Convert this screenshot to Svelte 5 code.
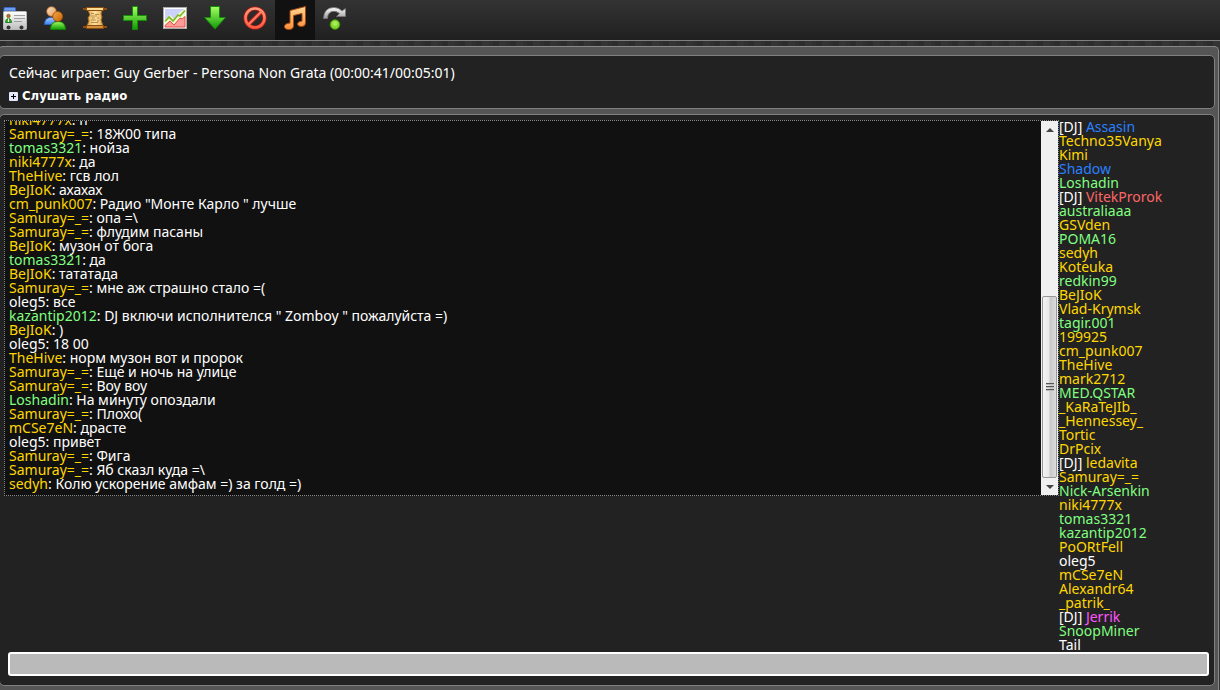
<script lang="ts">
    type Rank = 'gold' | 'green' | 'blue' | 'red' | 'pink' | 'plain';
    type Message = { from: string; rank: Rank; text: string };
    type Member = { name: string; rank: Rank; dj?: boolean };

    let draft = $state('');
    let active = $state('music');

    const tools = [
        { id: 'profile', label: 'Профиль' },
        { id: 'friends', label: 'Друзья' },
        { id: 'scroll', label: 'Правила' },
        { id: 'add', label: 'Добавить' },
        { id: 'stats', label: 'Статистика' },
        { id: 'download', label: 'Скачать' },
        { id: 'ban', label: 'Баны' },
        { id: 'music', label: 'Радио' },
        { id: 'redo', label: 'Перейти' }
    ];

    const messages: Message[] = [
        { from: 'niki4777x', rank: 'gold', text: 'п' },
        { from: 'Samuray=_=', rank: 'gold', text: '18Ж00 типа' },
        { from: 'tomas3321', rank: 'green', text: 'нойза' },
        { from: 'niki4777x', rank: 'gold', text: 'да' },
        { from: 'TheHive', rank: 'gold', text: 'гсв лол' },
        { from: 'BeJIoK', rank: 'gold', text: 'ахахах' },
        { from: 'cm_punk007', rank: 'gold', text: 'Радио "Монте Карло " лучше' },
        { from: 'Samuray=_=', rank: 'gold', text: 'опа =\\' },
        { from: 'Samuray=_=', rank: 'gold', text: 'флудим пасаны' },
        { from: 'BeJIoK', rank: 'gold', text: 'музон от бога' },
        { from: 'tomas3321', rank: 'green', text: 'да' },
        { from: 'BeJIoK', rank: 'gold', text: 'тататада' },
        { from: 'Samuray=_=', rank: 'gold', text: 'мне аж страшно стало =(' },
        { from: 'oleg5', rank: 'plain', text: 'все' },
        { from: 'kazantip2012', rank: 'green', text: 'DJ включи исполнителся " Zomboy " пожалуйста =)' },
        { from: 'BeJIoK', rank: 'gold', text: ')' },
        { from: 'oleg5', rank: 'plain', text: '18 00' },
        { from: 'TheHive', rank: 'gold', text: 'норм музон вот и пророк' },
        { from: 'Samuray=_=', rank: 'gold', text: 'Еще и ночь на улице' },
        { from: 'Samuray=_=', rank: 'gold', text: 'Воу воу' },
        { from: 'Loshadin', rank: 'green', text: 'На минуту опоздали' },
        { from: 'Samuray=_=', rank: 'gold', text: 'Плохо(' },
        { from: 'mCSe7eN', rank: 'gold', text: 'драсте' },
        { from: 'oleg5', rank: 'plain', text: 'привет' },
        { from: 'Samuray=_=', rank: 'gold', text: 'Фига' },
        { from: 'Samuray=_=', rank: 'gold', text: 'Яб сказл куда =\\' },
        { from: 'sedyh', rank: 'gold', text: 'Колю ускорение амфам =) за голд =)' }
    ];

    const members: Member[] = [
        { name: 'Assasin', rank: 'blue', dj: true },
        { name: 'Techno35Vanya', rank: 'gold' },
        { name: 'Kimi', rank: 'gold' },
        { name: 'Shadow', rank: 'blue' },
        { name: 'Loshadin', rank: 'green' },
        { name: 'VitekProrok', rank: 'red', dj: true },
        { name: 'australiaaa', rank: 'green' },
        { name: 'GSVden', rank: 'gold' },
        { name: 'POMA16', rank: 'green' },
        { name: 'sedyh', rank: 'gold' },
        { name: 'Koteuka', rank: 'gold' },
        { name: 'redkin99', rank: 'green' },
        { name: 'BeJIoK', rank: 'gold' },
        { name: 'Vlad-Krymsk', rank: 'gold' },
        { name: 'tagir.001', rank: 'green' },
        { name: '199925', rank: 'gold' },
        { name: 'cm_punk007', rank: 'gold' },
        { name: 'TheHive', rank: 'gold' },
        { name: 'mark2712', rank: 'gold' },
        { name: 'MED.QSTAR', rank: 'green' },
        { name: '_KaRaTeJIb_', rank: 'gold' },
        { name: '_Hennessey_', rank: 'gold' },
        { name: 'Tortic', rank: 'gold' },
        { name: 'DrPcix', rank: 'gold' },
        { name: 'ledavita', rank: 'gold', dj: true },
        { name: 'Samuray=_=', rank: 'gold' },
        { name: 'Nick-Arsenkin', rank: 'green' },
        { name: 'niki4777x', rank: 'gold' },
        { name: 'tomas3321', rank: 'green' },
        { name: 'kazantip2012', rank: 'green' },
        { name: 'PoORtFell', rank: 'gold' },
        { name: 'oleg5', rank: 'plain' },
        { name: 'mCSe7eN', rank: 'gold' },
        { name: 'Alexandr64', rank: 'gold' },
        { name: '_patrik_', rank: 'gold' },
        { name: 'Jerrik', rank: 'pink', dj: true },
        { name: 'SnoopMiner', rank: 'green' },
        { name: 'Tail', rank: 'plain' }
    ];
</script>

<nav class="toolbar">
    {#each tools as tool}
        <button class:active={active === tool.id} aria-label={tool.label} onclick={() => (active = tool.id)}>
            <svg viewBox="0 0 24 24" width="24" height="24">
                {#if tool.id === 'profile'}
                    <path d="M1 6V2.500Q1 1.500 2 1.500H11.500Q12.500 1.500 12.500 2.500V5H1z" fill="#6d9df0" stroke="#3d68c8" />
                    <rect x="0.500" y="5.500" width="23" height="18" rx="1" fill="url(#paper)" stroke="#b8b8b8" />
                    <rect x="2" y="8" width="7" height="9" fill="#e8ffe0" />
                    <path d="M2.500 16.500Q2.500 12.500 5.500 12.500T8.500 16.500z" fill="#48b13e" stroke="#1d7a1d" />
                    <circle cx="5.500" cy="10" r="1.800" fill="#b96a40" stroke="#8a4518" stroke-width="0.600" />
                    <path d="M5.500 12.500V16" stroke="#fff" />
                    <path d="M11 9.500H22M11 12.500H22M11 15.500H19" stroke="#a0a0a0" />
                    <circle cx="5.500" cy="21.500" r="2" fill="#333" />
                    <circle cx="18.500" cy="21.500" r="2" fill="#333" />
                {:else if tool.id === 'friends'}
                    <path d="M1.500 18.500Q1.500 11.500 8 11.500H12V18.500z" fill="url(#blue)" stroke="#2b62bf" />
                    <circle cx="8.500" cy="5.500" r="4.800" fill="url(#skin)" stroke="#b0662c" stroke-width="0.800" />
                    <path d="M7.500 23.500Q7.500 15.500 15 15.500T22.500 23.500z" fill="url(#green)" stroke="#158000" />
                    <circle cx="14.700" cy="10.500" r="5" fill="url(#tan)" stroke="#974700" stroke-width="0.800" />
                {:else if tool.id === 'scroll'}
                    <path d="M5 4H19L18 8L19 11L18 14L20 20H4L6 15L5 12L7 9z" fill="url(#parchment)" stroke="#a96f22" />
                    <path d="M8 7.500h3m1 1h4M8 10h6m-5 2h3m2 0h2M8 14h5m1 1h2M8 16.500h7" stroke="#a87937" stroke-width="0.800" />
                    <path d="M3.500 1.500H20.500V4.500H3.500zM3.500 19.500H20.500V22.500H3.500z" fill="url(#roll)" stroke="#8b4d10" />
                    <path d="M0 3H4M20 3H24M0 21H4M20 21H24" stroke="#944c0d" stroke-width="2" />
                {:else if tool.id === 'add'}
                    <path d="M9.500 0.500H14.500V9.500H23.500V14.500H14.500V23.500H9.500V14.500H0.500V9.500H9.500z" fill="url(#green)" stroke="#168b08" />
                {:else if tool.id === 'stats'}
                    <rect x="0.500" y="1.500" width="23" height="21" fill="#fff" stroke="#aaa" />
                    <rect x="2" y="3" width="20" height="18" fill="#ccd2fa" />
                    <path d="M2 14L7 9L11 13L16 7L22 2.500V21H2z" fill="#efffd0" />
                    <path d="M2 15.500L6 11L10 15L15 9L17 10L22 4.500" fill="none" stroke="#83ba2d" stroke-width="1.800" />
                    <path d="M2 19.500L7 15L11 19L17 12L19 13L22 10.500V21H2z" fill="#ff9c98" stroke="#e34c46" />
                {:else if tool.id === 'download'}
                    <path d="M7.500 0.500H16.500V11.500H22.500L12 23L1.500 11.500H7.500z" fill="url(#green)" stroke="#148a08" />
                {:else if tool.id === 'ban'}
                    <circle cx="12" cy="12" r="9.500" fill="none" stroke="#b7180d" stroke-width="4.200" />
                    <path d="M5.500 18.500L18.500 5.500" stroke="#b7180d" stroke-width="4.200" />
                    <circle cx="12" cy="12" r="9.500" fill="none" stroke="url(#red)" stroke-width="2.600" />
                    <path d="M5.500 18.500L18.500 5.500" stroke="#ff7964" stroke-width="2.400" />
                {:else if tool.id === 'music'}
                    <path
                        d="M7 4.500L22.500 0.500V17Q22.500 20.500 18.500 20.500T14.500 18Q14.500 15.500 19 15V7.500L10.500 9.500V19.500Q10.500 23.500 6 23.500T1.500 20.500Q1.500 17.500 7 17z"
                        fill="url(#orange)"
                        stroke="#a44914"
                    />
                {:else}
                    <path d="M0.500 12.500Q1 1.500 11 1.500Q16 1.500 19 5L22.500 2.500V10.500H13.500L16.500 7.500Q13 4.500 9 5.500Q4.500 7 4.500 12.500z" fill="url(#silver)" stroke="#777" stroke-width="0.800" />
                    <circle cx="12" cy="18.500" r="4.800" fill="#83d72c" stroke="#428f11" />
                    <circle cx="12" cy="17.500" r="2.500" fill="#a6ec58" />
                {/if}
            </svg>
        </button>
    {/each}
    <svg class="defs" width="0" height="0" aria-hidden="true">
        <defs>
            <linearGradient id="green" x2="0" y2="1"><stop stop-color="#a5ff63" /><stop offset="1" stop-color="#109b07" /></linearGradient>
            <linearGradient id="paper" x2="0" y2="1"><stop stop-color="#fff" /><stop offset="1" stop-color="#bdbdbd" /></linearGradient>
            <linearGradient id="blue" x2="0" y2="1"><stop stop-color="#a8ccff" /><stop offset="1" stop-color="#3b84ec" /></linearGradient>
            <linearGradient id="skin" x2="1" y2="1"><stop stop-color="#ffe2bd" /><stop offset="1" stop-color="#e39a59" /></linearGradient>
            <linearGradient id="tan" x2="1" y2="1"><stop stop-color="#f6a849" /><stop offset="1" stop-color="#c76205" /></linearGradient>
            <linearGradient id="parchment"><stop stop-color="#e0ab58" /><stop offset="0.500" stop-color="#ffe2a0" /><stop offset="1" stop-color="#e0ab58" /></linearGradient>
            <linearGradient id="roll" x2="0" y2="1"><stop stop-color="#ffe49a" /><stop offset="1" stop-color="#d08a37" /></linearGradient>
            <linearGradient id="red" x2="0" y2="1"><stop stop-color="#ff9c7e" /><stop offset="1" stop-color="#fa5b46" /></linearGradient>
            <linearGradient id="orange" x2="0" y2="1"><stop stop-color="#ffd794" /><stop offset="1" stop-color="#ff8d3a" /></linearGradient>
            <linearGradient id="silver" x2="0" y2="1"><stop stop-color="#fff" /><stop offset="1" stop-color="#999" /></linearGradient>
        </defs>
    </svg>
</nav>

<main>
    <section class="panel radio">
        <p>Сейчас играет: Guy Gerber - Persona Non Grata (00:00:41/00:05:01)</p>
        <button class="listen">
            <svg viewBox="0 0 9 9" width="9" height="9" aria-hidden="true">
                <rect width="9" height="9" rx="1" fill="#e4e8fa" />
                <path d="M2 4.500H7M4.500 2V7" stroke="#000" />
            </svg>
            Слушать радио
        </button>
    </section>

    <section class="panel chat">
        <div class="columns">
            <div class="log">
                <div class="messages">
                    {#each messages as message}
                        <p><span class={message.rank}>{message.from}</span>: {message.text}</p>
                    {/each}
                </div>
                <div class="scrollbar">
                    <button class="arrow up" aria-label="Вверх"></button>
                    <div class="track">
                        <div class="thumb"><i></i></div>
                    </div>
                    <button class="arrow down" aria-label="Вниз"></button>
                </div>
            </div>
            <ul class="members">
                {#each members as member}
                    <li>{#if member.dj}[DJ]{' '}{/if}<a href="#{member.name}" class={member.rank}>{member.name}</a></li>
                {/each}
            </ul>
        </div>
        <input type="text" aria-label="Сообщение" bind:value={draft} />
    </section>
</main>

<style>
    :global(body) {
        background: repeating-linear-gradient(90deg, #2c2c2c 0 6px, #343434 6px 13px, #303030 13px 17px);
        color: #fff;
        font: 14px/14px "Noto Sans", sans-serif;
        overflow: hidden;
    }

    :global(#app) {
        display: flex;
        flex-direction: column;
        min-height: 100vh;
    }

    p,
    ul {
        margin: 0;
        padding: 0;
    }

    button {
        border: 0;
        padding: 0;
        background: none;
        color: inherit;
        font: inherit;
        cursor: pointer;
    }

    .toolbar {
        display: flex;
        height: 40px;
        padding-right: 5px;
        margin-left: -5px;
        background: linear-gradient(#333, #202020);
        border-bottom: 1px solid #808080;
    }

    .toolbar button {
        display: grid;
        place-items: center;
        width: 40px;
        padding-bottom: 4px;
    }

    .toolbar button.active {
        background: #111;
    }

    .defs {
        position: absolute;
    }

    main {
        flex: 1;
        display: flex;
        flex-direction: column;
        gap: 5px;
        margin: 5px 1px 0 -2px;
        padding: 8px 3px 4px 0;
        background: #555;
        border: 1px solid #888;
        border-bottom: 0;
        border-radius: 5px 5px 0 0;
    }

    .panel {
        background: #222;
        border: 1px solid #808080;
        border-radius: 5px;
    }

    .radio {
        padding: 10px 9px 5px;
    }

    .listen {
        display: flex;
        align-items: center;
        gap: 4px;
        margin-top: 9px;
        font: bold 13px/14px "DejaVu Sans Condensed", "DejaVu Sans", sans-serif;
    }

    .chat {
        flex: 1;
        padding: 5px 4px 8px;
    }

    .columns {
        display: flex;
        align-items: flex-start;
    }

    .log {
        flex: 1;
        display: flex;
        height: 374px;
        background: #111;
        border: 1px dotted #888;
    }

    .messages {
        flex: 1;
        display: flex;
        flex-direction: column;
        justify-content: flex-end;
        overflow: hidden;
        padding: 0 4px 4px;
    }

    .scrollbar {
        display: flex;
        flex-direction: column;
        width: 17px;
        background: #f0f0f0;
    }

    .arrow {
        display: grid;
        place-items: center;
        height: 17px;
    }

    .arrow::before {
        content: '';
        border: 4px solid transparent;
    }

    .arrow.up::before {
        border-top: 0;
        border-bottom-color: #444;
    }

    .arrow.down::before {
        border-bottom: 0;
        border-top-color: #444;
    }

    .track {
        flex: 1;
        display: flex;
        flex-direction: column;
        justify-content: flex-end;
        padding: 0 1px;
    }

    .thumb {
        display: grid;
        place-items: center;
        height: 180px;
        background: linear-gradient(90deg, #f4f4f4, #e8e8e8 45%, #c8c8cc 55%, #dcdcdc);
        border: 1px solid #979797;
        border-radius: 2px;
    }

    .thumb i {
        width: 8px;
        height: 8px;
        background: repeating-linear-gradient(#555 0 1px, #bbb 1px 2px, transparent 2px 3px);
    }

    .members {
        width: 151px;
        list-style: none;
    }

    .members a {
        text-decoration: none;
    }

    .gold {
        color: #ffd700;
    }

    .green {
        color: #80ff80;
    }

    .blue {
        color: #2a80ff;
    }

    .red {
        color: #ff6666;
    }

    .pink {
        color: #ff55ff;
    }

    .plain {
        color: #fff;
    }

    input {
        display: block;
        box-sizing: border-box;
        width: calc(100% - 5px);
        height: 24px;
        margin: 0 1px 0 4px;
        padding: 0 4px;
        background: #bababa;
        border: 2px solid #fff;
        border-radius: 3px;
        color: #111;
        font: inherit;
    }
</style>
